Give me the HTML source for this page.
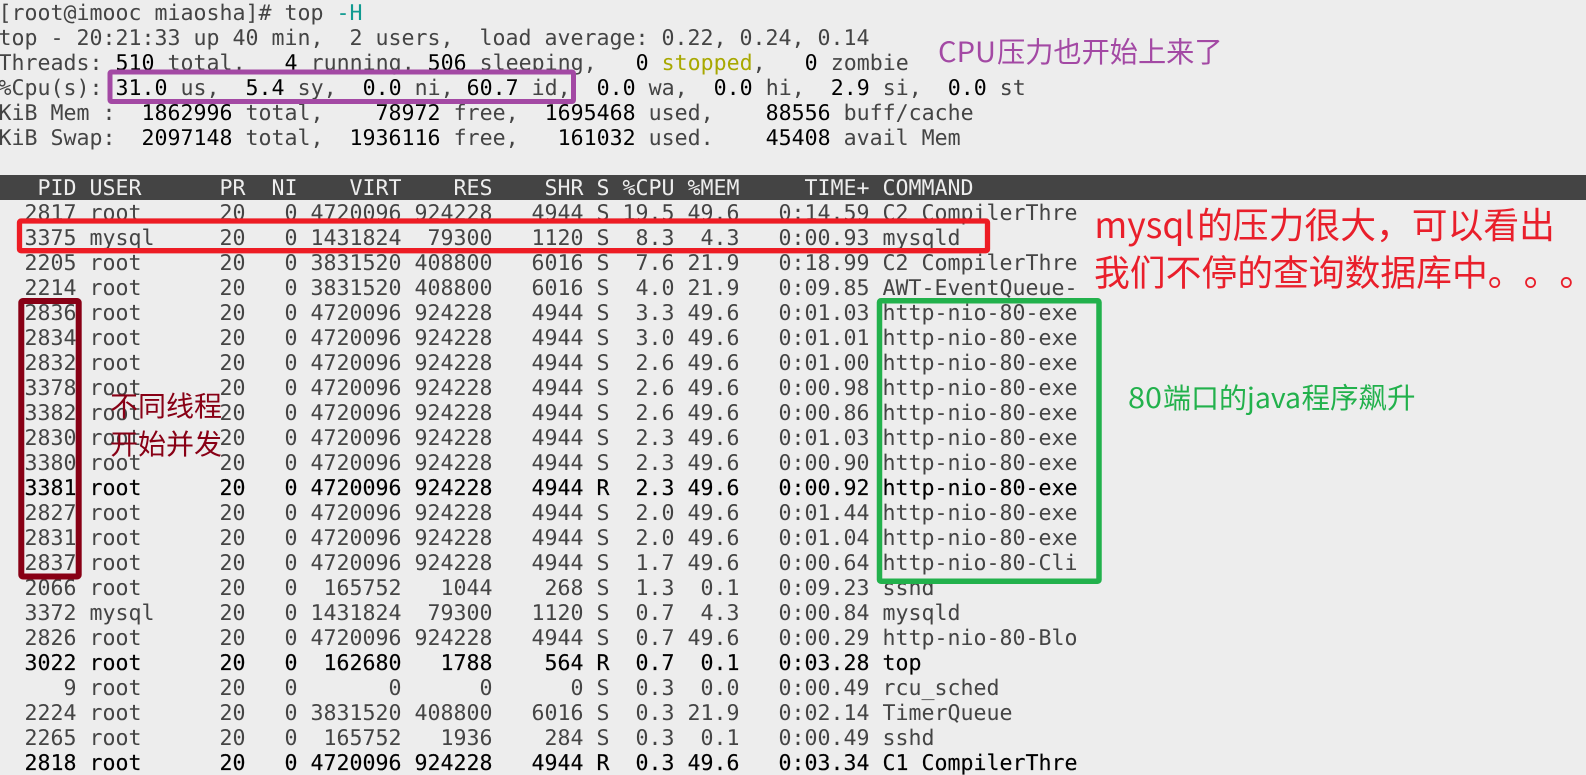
<!DOCTYPE html>
<html lang="zh-CN">
<head>
<meta charset="utf-8">
<title>top -H</title>
<style>
html,body{margin:0;padding:0;background:#ededed;}
#w{position:relative;width:1586px;height:775px;overflow:hidden;background:#ededed;}
#bar{position:absolute;left:0;top:175px;width:1586px;height:25px;background:#444;}
pre{position:absolute;left:-1.5px;top:1px;margin:0;font-family:"DejaVu Sans Mono","Liberation Mono",monospace;font-size:21.6px;line-height:25px;color:#444;white-space:pre;text-rendering:geometricPrecision;}
b{font-weight:normal;color:#000;}
.h{color:#ededed;}
.k{color:#000;-webkit-text-stroke:.15px #000;}
.y{color:#a8a800;}
.t{color:#0f9a90;}
svg{position:absolute;left:0;top:0;}
svg text{font-family:"Noto Sans CJK SC","Liberation Sans",sans-serif;text-spacing-trim:space-all;}
</style>
</head>
<body>
<div id="w">
<div id="bar"></div>
<pre>[root@imooc miaosha]# top <span class="t">-H</span>
top - 20:21:33 up 40 min,  2 users,  load average: 0.22, 0.24, 0.14
Threads: <b>510</b> total,   <b>4</b> running, <b>506</b> sleeping,   <b>0</b> <span class="y">stopped</span>,   <b>0</b> zombie
%Cpu(s): <b>31.0</b> us,  <b>5.4</b> sy,  <b>0.0</b> ni, <b>60.7</b> id,  <b>0.0</b> wa,  <b>0.0</b> hi,  <b>2.9</b> si,  <b>0.0</b> st
KiB Mem : <b> 1862996</b> total,  <b>  78972</b> free,  <b>1695468</b> used,    <b>88556</b> buff/cache
KiB Swap: <b> 2097148</b> total,  <b>1936116</b> free,   <b>161032</b> used.    <b>45408</b> avail Mem

<span class="h">   PID USER      PR  NI    VIRT    RES    SHR S %CPU %MEM     TIME+ COMMAND</span>
  2817 root      20   0 4720096 924228   4944 S 19.5 49.6   0:14.59 C2 CompilerThre
  3375 mysql     20   0 1431824  79300   1120 S  8.3  4.3   0:00.93 mysqld
  2205 root      20   0 3831520 408800   6016 S  7.6 21.9   0:18.99 C2 CompilerThre
  2214 root      20   0 3831520 408800   6016 S  4.0 21.9   0:09.85 AWT-EventQueue-
  2836 root      20   0 4720096 924228   4944 S  3.3 49.6   0:01.03 http-nio-80-exe
  2834 root      20   0 4720096 924228   4944 S  3.0 49.6   0:01.01 http-nio-80-exe
  2832 root      20   0 4720096 924228   4944 S  2.6 49.6   0:01.00 http-nio-80-exe
  3378 root      20   0 4720096 924228   4944 S  2.6 49.6   0:00.98 http-nio-80-exe
  3382 root      20   0 4720096 924228   4944 S  2.6 49.6   0:00.86 http-nio-80-exe
  2830 root      20   0 4720096 924228   4944 S  2.3 49.6   0:01.03 http-nio-80-exe
  3380 root      20   0 4720096 924228   4944 S  2.3 49.6   0:00.90 http-nio-80-exe
<span class="k">  3381 root      20   0 4720096 924228   4944 R  2.3 49.6   0:00.92 http-nio-80-exe</span>
  2827 root      20   0 4720096 924228   4944 S  2.0 49.6   0:01.44 http-nio-80-exe
  2831 root      20   0 4720096 924228   4944 S  2.0 49.6   0:01.04 http-nio-80-exe
  2837 root      20   0 4720096 924228   4944 S  1.7 49.6   0:00.64 http-nio-80-Cli
  2066 root      20   0  165752   1044    268 S  1.3  0.1   0:09.23 sshd
  3372 mysql     20   0 1431824  79300   1120 S  0.7  4.3   0:00.84 mysqld
  2826 root      20   0 4720096 924228   4944 S  0.7 49.6   0:00.29 http-nio-80-Blo
<span class="k">  3022 root      20   0  162680   1788    564 R  0.7  0.1   0:03.28 top</span>
     9 root      20   0       0      0      0 S  0.3  0.0   0:00.49 rcu_sched
  2224 root      20   0 3831520 408800   6016 S  0.3 21.9   0:02.14 TimerQueue
  2265 root      20   0  165752   1936    284 S  0.3  0.1   0:00.49 sshd
<span class="k">  2818 root      20   0 4720096 924228   4944 R  0.3 49.6   0:03.34 C1 CompilerThre</span></pre>
<svg width="1586" height="775" viewBox="0 0 1586 775" xmlns="http://www.w3.org/2000/svg">
<rect x="110" y="72" width="463.5" height="29.5" rx="1.5" fill="none" stroke="#a349a4" stroke-width="5"/>
<rect x="19.5" y="221" width="968" height="29.7" rx="1.5" fill="none" stroke="#ed1c24" stroke-width="5.3"/>
<rect x="879.5" y="300.75" width="219.5" height="280.5" rx="1.5" fill="none" stroke="#22b14c" stroke-width="5.5"/>
<rect x="21.3" y="301" width="57.4" height="275.5" rx="1.5" fill="none" stroke="#880015" stroke-width="6"/>
<text x="938" y="62" font-size="28" fill="#a349a4" textLength="58" lengthAdjust="spacingAndGlyphs">CPU</text>
<text x="997" y="62" font-size="28.2" fill="#a349a4">压力也开始上来了</text>
<text x="1094.4" y="238" font-size="35.8" fill="#e91f2b" textLength="100" lengthAdjust="spacingAndGlyphs">mysql</text>
<text x="1197" y="238" font-size="35.8" fill="#e91f2b">的压力很大，可以看出</text>
<text x="1094" y="285.5" font-size="35.8" fill="#e91f2b">我们不停的查询数据库中</text>
<text x="1487.8" y="285.5" font-size="35.8" fill="#e91f2b">。</text>
<text x="1523.6" y="285.5" font-size="35.8" fill="#e91f2b">。</text>
<text x="1559.4" y="285.5" font-size="35.8" fill="#e91f2b">。</text>
<text x="1128" y="408" font-size="28" fill="#22b14c" textLength="34" lengthAdjust="spacingAndGlyphs">80</text>
<text x="1163" y="408" font-size="28" fill="#22b14c">端口的</text>
<text x="1247" y="408" font-size="28" fill="#22b14c" textLength="54" lengthAdjust="spacingAndGlyphs">java</text>
<text x="1301.5" y="408" font-size="28.5" fill="#22b14c">程序飙升</text>
<text x="110" y="416" font-size="28" fill="#880015">不同线程</text>
<text x="110" y="454" font-size="28" fill="#880015">开始并发</text>
</svg>
</div>
</body>
</html>
